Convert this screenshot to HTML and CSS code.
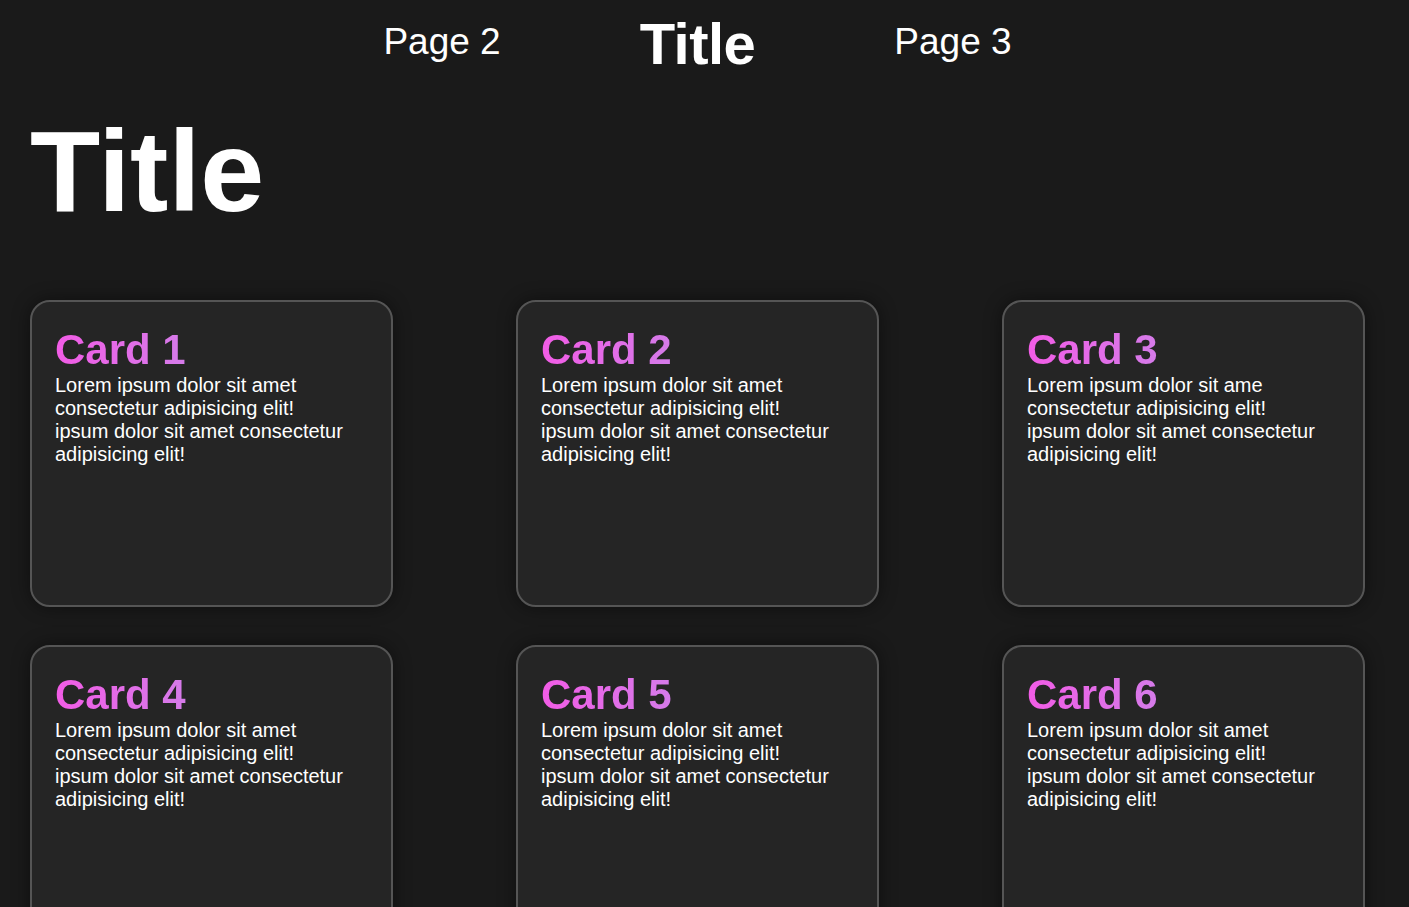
FILE: index.html
```html
<!DOCTYPE html>
<html lang="en">
<head>
<meta charset="utf-8">
<title>Title</title>
<link rel="stylesheet" href="styles.css">
</head>
<body>
<nav class="nav">
  <a class="nav-link" href="#">Page 2</a>
  <span class="nav-title">Title</span>
  <a class="nav-link" href="#">Page 3</a>
</nav>
<main class="main">
  <h1 class="page-title">Title</h1>
  <section class="grid">
    <article class="card">
      <h2 class="card-title">Card 1</h2>
      <p class="card-text">Lorem ipsum dolor sit amet consectetur adipisicing elit! ipsum dolor sit amet consectetur adipisicing elit!</p>
    </article>
    <article class="card">
      <h2 class="card-title">Card 2</h2>
      <p class="card-text">Lorem ipsum dolor sit amet consectetur adipisicing elit! ipsum dolor sit amet consectetur adipisicing elit!</p>
    </article>
    <article class="card">
      <h2 class="card-title">Card 3</h2>
      <p class="card-text">Lorem ipsum dolor sit ame consectetur adipisicing elit! ipsum dolor sit amet consectetur adipisicing elit!</p>
    </article>
    <article class="card">
      <h2 class="card-title">Card 4</h2>
      <p class="card-text">Lorem ipsum dolor sit amet consectetur adipisicing elit! ipsum dolor sit amet consectetur adipisicing elit!</p>
    </article>
    <article class="card">
      <h2 class="card-title">Card 5</h2>
      <p class="card-text">Lorem ipsum dolor sit amet consectetur adipisicing elit! ipsum dolor sit amet consectetur adipisicing elit!</p>
    </article>
    <article class="card">
      <h2 class="card-title">Card 6</h2>
      <p class="card-text">Lorem ipsum dolor sit amet consectetur adipisicing elit! ipsum dolor sit amet consectetur adipisicing elit!</p>
    </article>
  </section>
</main>
</body>
</html>
```

FILE: styles.css
```css
html, body {
  margin: 0;
  padding: 0;
  background: #1a1a1a;
  color: #ffffff;
  font-family: "Liberation Sans", Arial, sans-serif;
  overflow: hidden;
}

.nav {
  display: flex;
  justify-content: center;
  align-items: center;
  gap: 139px;
  height: 86px;
  padding-right: 14px;
}

.nav-link {
  color: #ffffff;
  text-decoration: none;
  font-size: 37px;
  margin-top: -3px;
}

.nav-title {
  font-size: 58px;
  font-weight: 700;
  letter-spacing: -0.5px;
}

.main {
  padding: 0 30px;
}

.page-title {
  margin: 14px 0 0 0;
  font-size: 115px;
  font-weight: 700;
  line-height: 1;
  height: 200px;
  padding-top: 14px;
  box-sizing: border-box;
}

.grid {
  display: grid;
  grid-template-columns: repeat(3, 363px);
  column-gap: 123px;
  row-gap: 38px;
}

.card {
  height: 307px;
  box-sizing: border-box;
  background: #252525;
  border: 2px solid #555555;
  border-radius: 20px;
  padding: 24px 23px;
  box-shadow: 0 0 18px rgba(0, 0, 0, 0.45);
}

.card-title {
  margin: 0;
  font-size: 42px;
  font-weight: 700;
  line-height: 48px;
  background: linear-gradient(90deg, #f25ce6, #d57be9);
  -webkit-background-clip: text;
  background-clip: text;
  color: transparent;
  display: inline-block;
}

.card-text {
  margin: 0;
  font-size: 20px;
  line-height: 23px;
  max-width: 292px;
}
```
